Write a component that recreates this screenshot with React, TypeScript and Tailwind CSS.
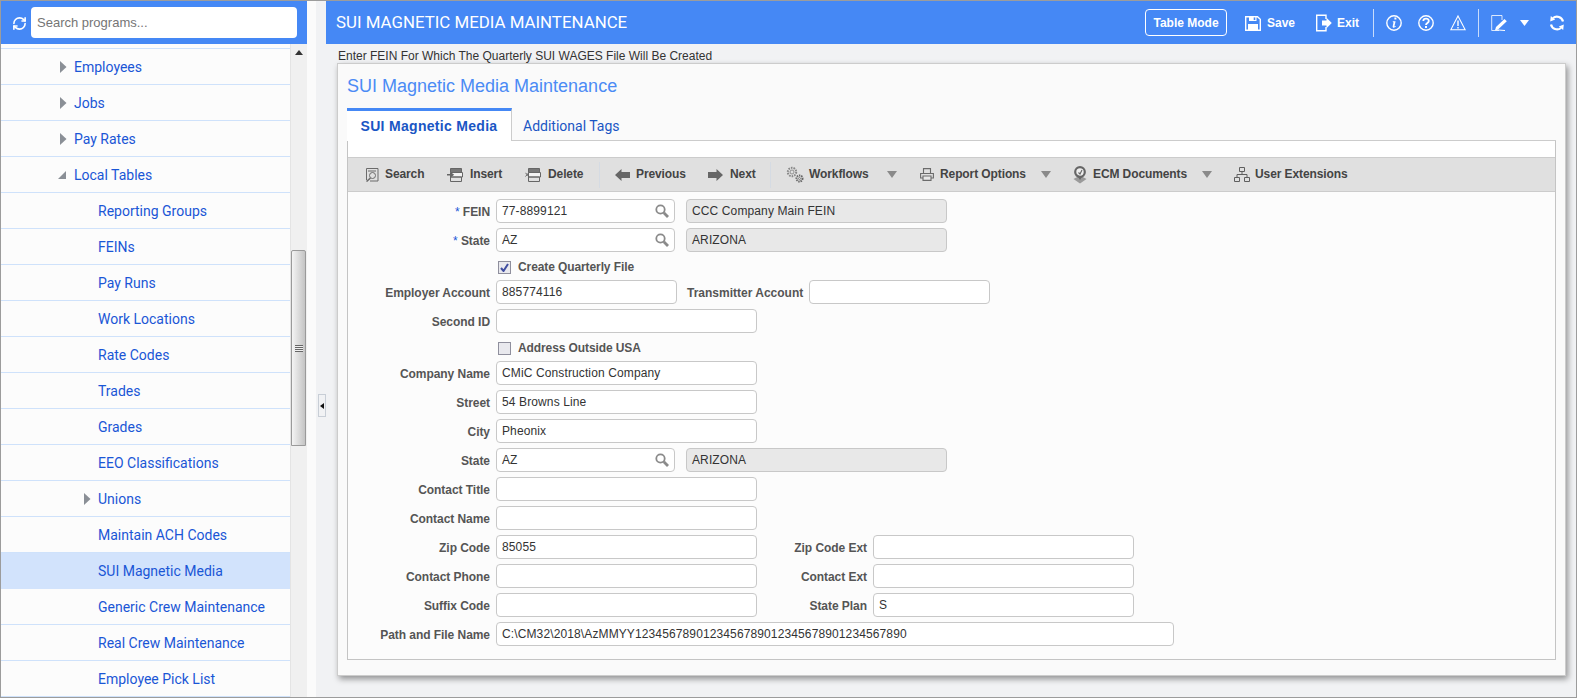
import { RefreshCw } from 'lucide-react'
import type { ReactNode } from 'react'

const menu = [
  { nombre: 'Employees', nivel: 1, flecha: 'der' },
  { nombre: 'Jobs', nivel: 1, flecha: 'der' },
  { nombre: 'Pay Rates', nivel: 1, flecha: 'der' },
  { nombre: 'Local Tables', nivel: 1, flecha: 'abajo' },
  { nombre: 'Reporting Groups', nivel: 2 },
  { nombre: 'FEINs', nivel: 2 },
  { nombre: 'Pay Runs', nivel: 2 },
  { nombre: 'Work Locations', nivel: 2 },
  { nombre: 'Rate Codes', nivel: 2 },
  { nombre: 'Trades', nivel: 2 },
  { nombre: 'Grades', nivel: 2 },
  { nombre: 'EEO Classifications', nivel: 2 },
  { nombre: 'Unions', nivel: 2, flecha: 'der' },
  { nombre: 'Maintain ACH Codes', nivel: 2 },
  { nombre: 'SUI Magnetic Media', nivel: 2, activo: true },
  { nombre: 'Generic Crew Maintenance', nivel: 2 },
  { nombre: 'Real Crew Maintenance', nivel: 2 },
  { nombre: 'Employee Pick List', nivel: 2 },
]

function Sidebar() {
  return (
    <div className="w-[306px] h-full flex flex-col shrink-0">
      <div className="h-[43px] bg-[#4588f5] flex items-center shrink-0">
        <RefreshCw size={15} strokeWidth={2.6} className="text-white ml-[11px] mr-[4px] mt-[1px]" />
        <div className="w-[266px] h-[31px] bg-white rounded-[4px] flex items-center pl-[6px] text-[13px] text-[#757575]">
          Search programs...
        </div>
      </div>
      <div className="flex-1 flex min-h-0">
        <div className="w-[290px] bg-[#fcfcfc] pt-[4px] overflow-hidden border-r border-[#e4e4e4]">
          <div className="border-t border-[#cfe2fb]">
            {menu.map((m) => (
              <div
                key={m.nombre}
                className={`h-[36px] flex items-center pt-[1px] border-b font-['Roboto',sans-serif] text-[14px] text-[#1a56d6] ${
                  m.activo ? 'bg-[#d2e3fc] border-[#d2e3fc]' : 'border-[#cfe2fb]'
                }`}
              >
                <div className={`relative ${m.nivel === 1 ? 'ml-[73px]' : 'ml-[97px]'}`}>
                  {m.flecha === 'der' && (
                    <svg width="7" height="12" viewBox="0 0 7 12" className="absolute left-[-14px] top-[4px]">
                      <path d="M0 0 L6.5 6 L0 12 Z" fill="#8a8f96" />
                    </svg>
                  )}
                  {m.flecha === 'abajo' && (
                    <svg width="8" height="8" viewBox="0 0 8 8" className="absolute left-[-16px] top-[6px]">
                      <path d="M8 0 V8 H0 Z" fill="#8a8f96" />
                    </svg>
                  )}
                  {m.nombre}
                </div>
              </div>
            ))}
          </div>
        </div>
        <div className="w-[16px] bg-[#f0f0f0] flex flex-col items-start">
          <svg width="8" height="5" viewBox="0 0 8 5" className="mt-[6px] mb-[195px] ml-[4px]">
            <path d="M4 0 L8 5 H0 Z" fill="#333" />
          </svg>
          <div className="w-[15px] h-[196px] border border-[#9a9a9a] rounded-t-[2px] bg-gradient-to-r from-[#f4f4f4] via-[#dcdcdc] to-[#c4c4c4] flex items-center justify-center">
            <div className="w-[8px] flex flex-col gap-[1px] bg-[#efefef]">
              <div className="h-[1px] bg-[#666]" />
              <div className="h-[1px] bg-[#666]" />
              <div className="h-[1px] bg-[#666]" />
              <div className="h-[1px] bg-[#666]" />
            </div>
          </div>
        </div>
      </div>
    </div>
  )
}

const HeaderIcon = ({ children, w = 16 }: { children: ReactNode; w?: number }) => (
  <svg width={w} height="18" viewBox={`0 0 ${w} 18`} fill="none" stroke="#fff" strokeWidth="1.4" className="shrink-0">
    {children}
  </svg>
)

function Header() {
  return (
    <div className="h-[43px] bg-[#4588f5] flex items-center shrink-0 text-white">
      <div className="ml-[10px] text-[16.85px] font-['Roboto',sans-serif] w-[809px] whitespace-nowrap">SUI MAGNETIC MEDIA MAINTENANCE</div>
      <div className="w-[82px] h-[27px] border border-white rounded-[4px] flex items-center justify-center text-[12px] font-bold">
        Table Mode
      </div>
      <div className="ml-[18px]">
        <HeaderIcon>
          <path d="M0.7 2.7 H12.5 L15.3 5.2 V16.3 H0.7 Z" />
          <path d="M4 2.5 H11.5 V7 H4 Z M3 10 H13 V16 H3 Z" fill="#fff" stroke="none" />
          <path d="M8.7 3.4 H10.3 V6 H8.7 Z" fill="#4588f5" stroke="none" />
        </HeaderIcon>
      </div>
      <span className="ml-[6px] text-[12px] font-bold w-[27px]">Save</span>
      <div className="ml-[22px]">
        <HeaderIcon>
          <path d="M10 5 V1.2 H0.7 V16.8 H10 V13" />
          <path d="M6 6.5 H10.5 V3.8 L15.8 9 L10.5 14.2 V11.5 H6 Z" fill="#fff" stroke="none" />
        </HeaderIcon>
      </div>
      <span className="ml-[5px] text-[12px] font-bold w-[22px]">Exit</span>
      <div className="ml-[14px] mr-[12px] w-[1px] h-[28px] bg-[#c9dcfb]" />
      <HeaderIcon>
        <circle cx="8" cy="9" r="7.2" />
        <path d="M8.4 3.6 H10.4 V5.6 H8.4 Z M6.8 7.2 H9.6 L8.5 12 C8.4 12.6 9 12.6 9.9 12 L10 12.6 C8.6 14 6.3 14.4 6.7 12.3 L7.5 8.4 L6.8 8.1 Z" fill="#fff" stroke="none" />
      </HeaderIcon>
      <div className="ml-[16px]">
        <HeaderIcon>
          <circle cx="8" cy="9" r="7.2" />
          <path d="M5.3 7 C5.4 3.9 10.8 3.9 10.8 7 C10.8 9 8 9 8 11" strokeWidth="1.8" />
          <path d="M7 12 H9 V14 H7 Z" fill="#fff" stroke="none" />
        </HeaderIcon>
      </div>
      <div className="ml-[16px]">
        <HeaderIcon>
          <path d="M8 2 L15.2 15.8 H0.8 Z" strokeWidth="1.1" />
          <path d="M7.3 6.5 H8.7 V12 H7.3 Z M7.3 13 H8.7 V14.5 H7.3 Z" fill="#fff" stroke="none" />
        </HeaderIcon>
      </div>
      <div className="ml-[12px] mr-[12px] w-[1px] h-[28px] bg-[#c9dcfb]" />
      <HeaderIcon>
        <path d="M8 16.5 H0.7 V1.5 H11 V6" strokeWidth="1" opacity="0.8" />
        <path d="M4 16.5 L5 13 L13.5 5 L15.8 7.2 L7.3 15.2 Z" fill="#fff" stroke="none" />
        <path d="M4.6 15.8 L14 16.5" strokeWidth="1" />
      </HeaderIcon>
      <svg width="9" height="6" viewBox="0 0 9 6" className="ml-[13px] mt-[1px]">
        <path d="M0 0 H9 L4.5 6 Z" fill="#fff" />
      </svg>
      <div className="ml-[20px]">
        <HeaderIcon>
          <path d="M14 7.5 A6.2 6.2 0 0 0 4 4" strokeWidth="2.2" />
          <path d="M2 10.5 A6.2 6.2 0 0 0 12 14" strokeWidth="2.2" />
          <path d="M1.2 7.5 L1.8 2 L6.2 5.6 Z M14.8 10.5 L14.2 16 L9.8 12.4 Z" fill="#fff" stroke="none" />
        </HeaderIcon>
      </div>
    </div>
  )
}

const IconoLupaDoc = () => (
  <svg width="14" height="14" viewBox="0 0 14 14" fill="none" stroke="#6b6b6b" strokeWidth="1">
    <path d="M1.5 12 V0.5 H13 V13 H5" />
    <path d="M3 3 H11" />
    <circle cx="7.5" cy="7.5" r="3" />
    <path d="M5.5 10 L1.5 13.5" strokeWidth="1.6" />
  </svg>
)

const IconoFilas = ({ x }: { x?: boolean }) => (
  <svg width="16" height="14" viewBox="0 0 16 14" fill="none" stroke="#666" strokeWidth="1">
    <path d="M3.5 0.5 H14.5 V4.5 H3.5 Z" fill="#777" />
    <path d="M3.5 4.5 H15.5 V9 H3.5 Z" fill="#f2f2f2" />
    <path d="M3.5 9 H14.5 V13.5 H3.5 Z" />
    {x ? (
      <path d="M0.5 4.8 L3.7 8.5 M3.7 4.8 L0.5 8.5" />
    ) : (
      <path d="M0 6.7 H5.5 M3.5 4.8 L6 6.7 L3.5 8.6" strokeWidth="1.4" />
    )}
  </svg>
)

const IconoEngranes = () => (
  <svg width="18" height="17" viewBox="0 0 18 17" fill="none" stroke="#888">
    <circle cx="6" cy="6" r="4.2" strokeWidth="2" strokeDasharray="1.6 1" />
    <circle cx="6" cy="6" r="2" strokeWidth="0.9" />
    <circle cx="13.5" cy="12.5" r="3" strokeWidth="2" strokeDasharray="1.4 0.8" stroke="#666" />
    <circle cx="13.5" cy="12.5" r="1" fill="#ddd" stroke="#666" strokeWidth="0.7" />
  </svg>
)

const IconoImpresora = () => (
  <svg width="14" height="13" viewBox="0 0 14 13" fill="none" stroke="#6b6b6b" strokeWidth="1.1">
    <path d="M3.5 5 V0.6 H10.5 V5" />
    <path d="M0.6 5.5 H13.4 V10 H0.6 Z" fill="#e0e0e0" />
    <path d="M3 8 H11 V12.4 H3 Z" fill="#e8e8e8" />
  </svg>
)

const IconoEcm = () => (
  <svg width="14" height="18" viewBox="0 0 14 18" fill="none" stroke="#666">
    <path d="M0.5 13 L7 9.5 L13.5 13 L7 17.5 Z" fill="#9a9a9a" stroke="none" />
    <circle cx="7" cy="6" r="4.8" strokeWidth="2.2" fill="#eee" />
    <path d="M5.5 6.5 L7 8 L9 4" strokeWidth="1.1" />
    <path d="M4.5 10 L7 14 L9.5 10" fill="#666" stroke="none" />
  </svg>
)

const IconoArbol = () => (
  <svg width="16" height="15" viewBox="0 0 16 15" fill="none" stroke="#5f5f5f" strokeWidth="1">
    <path d="M5.5 0.5 H10.5 V4.5 H5.5 Z" />
    <path d="M8 4.5 V7.5 M3 10.5 V7.5 H13 V10.5" />
    <path d="M0.5 10.5 H5.5 V14.5 H0.5 Z M10.5 10.5 H15.5 V14.5 H10.5 Z" />
  </svg>
)

const FlechaGris = ({ dir }: { dir: 'izq' | 'der' }) => (
  <svg width="15" height="12" viewBox="0 0 15 12">
    <path d={dir === 'izq' ? 'M0 6 L6.5 0 V3 H15 V9 H6.5 V12 Z' : 'M15 6 L8.5 0 V3 H0 V9 H8.5 V12 Z'} fill="#666" />
  </svg>
)

const Caret = ({ ml }: { ml: string }) => (
  <svg width="10" height="7" viewBox="0 0 10 7" className={`shrink-0 ${ml}`}>
    <path d="M0 0 H10 L5 7 Z" fill="#8a8a8a" />
  </svg>
)

const Sep = ({ className }: { className: string }) => <div className={`w-[1px] h-[26px] bg-[#d5dbe3] ${className}`} />

function Toolbar() {
  return (
    <div className="h-[35px] mt-[16px] bg-[#e0e0e0] border-y border-[#cccccc] flex items-center text-[12px] font-bold tracking-[-0.1px] whitespace-nowrap text-[#444] shrink-0">
      <div className="ml-[17px]"><IconoLupaDoc /></div>
      <span className="ml-[6px] w-[40px] pb-[1px]">Search</span>
      <div className="ml-[22px]"><IconoFilas /></div>
      <span className="ml-[7px] w-[33px] pb-[1px]">Insert</span>
      <div className="ml-[22px]"><IconoFilas x /></div>
      <span className="ml-[7px] w-[36px] pb-[1px]">Delete</span>
      <Sep className="ml-[15px]" />
      <div className="ml-[15px]"><FlechaGris dir="izq" /></div>
      <span className="ml-[6px] w-[50px] pb-[1px]">Previous</span>
      <div className="ml-[22px]"><FlechaGris dir="der" /></div>
      <span className="ml-[7px] w-[25px] pb-[1px]">Next</span>
      <Sep className="ml-[15px]" />
      <div className="ml-[15px]"><IconoEngranes /></div>
      <span className="ml-[5px] w-[62px] pb-[1px]">Workflows</span>
      <Caret ml="ml-[16px]" />
      <div className="ml-[23px]"><IconoImpresora /></div>
      <span className="ml-[6px] w-[85px] pb-[1px]">Report Options</span>
      <Caret ml="ml-[16px]" />
      <div className="ml-[22px]"><IconoEcm /></div>
      <span className="ml-[6px] w-[93px] pb-[1px]">ECM Documents</span>
      <Caret ml="ml-[16px]" />
      <div className="ml-[22px]"><IconoArbol /></div>
      <span className="ml-[5px] pb-[1px]">User Extensions</span>
    </div>
  )
}

const Label = ({ children, w, req }: { children: string; w: string; req?: boolean }) => (
  <div className={`${w} shrink-0 text-right font-bold tracking-[-0.05px] text-[#555] pt-[1px] whitespace-nowrap`}>
    {req && <span className="text-[#1a56d6] font-normal">* </span>}
    {children}
  </div>
)

const Lupa = () => (
  <svg width="14" height="14" viewBox="0 0 14 14" fill="none" stroke="#8a8a8a" className="shrink-0">
    <circle cx="5.5" cy="5.5" r="4.2" strokeWidth="1.8" />
    <path d="M8.8 8.8 L13 13" strokeWidth="2.8" />
  </svg>
)

const Campo = ({ w, valor, lupa, ro, ml }: { w: string; valor?: string; lupa?: boolean; ro?: boolean; ml?: string }) => (
  <div
    className={`${w} ${ml ?? ''} h-[24px] shrink-0 rounded-[4px] border border-[#c8c8c8] flex items-center justify-between pl-[5px] pr-[5px] text-[#333] tracking-[0.12px] ${
      ro ? 'bg-[#e8e8e8]' : 'bg-white'
    }`}
  >
    <span className="pb-[1px]">{valor}</span>
    {lupa && <Lupa />}
  </div>
)

const Fila = ({ children }: { children: ReactNode }) => <div className="flex items-center h-[24px] gap-[6px]">{children}</div>

const Check = ({ texto, marcado }: { texto: string; marcado?: boolean }) => (
  <div className="flex items-center h-[18px] pt-[2px] pl-[150px] font-bold tracking-[-0.1px] text-[#555]">
    <div className="w-[13px] h-[13px] border border-[#8f8f9d] bg-[#e9e9ee] flex items-center justify-center shrink-0">
      {marcado && (
        <svg width="9" height="9" viewBox="0 0 9 9">
          <path d="M1 5 L3.5 8 L8 1" fill="none" stroke="#3f4da0" strokeWidth="2" />
        </svg>
      )}
    </div>
    <span className="ml-[7px]">{texto}</span>
  </div>
)

function Formulario() {
  return (
    <div className="flex-1 bg-[#fcfcfc] pt-[7px] flex flex-col gap-[5px] text-[12px]">
      <Fila>
        <Label w="w-[142px]" req>FEIN</Label>
        <Campo w="w-[179px]" valor="77-8899121" lupa />
        <Campo w="w-[261px]" ml="ml-[5px]" valor="CCC Company Main FEIN" ro />
      </Fila>
      <Fila>
        <Label w="w-[142px]" req>State</Label>
        <Campo w="w-[179px]" valor="AZ" lupa />
        <Campo w="w-[261px]" ml="ml-[5px]" valor="ARIZONA" ro />
      </Fila>
      <Check texto="Create Quarterly File" marcado />
      <Fila>
        <Label w="w-[142px]">Employer Account</Label>
        <Campo w="w-[181px]" valor="885774116" />
        <div className="ml-[4px] w-[116px] shrink-0 font-bold text-[#555] pt-[1px] whitespace-nowrap">Transmitter Account</div>
        <Campo w="w-[181px]" />
      </Fila>
      <Fila>
        <Label w="w-[142px]">Second ID</Label>
        <Campo w="w-[261px]" />
      </Fila>
      <Check texto="Address Outside USA" />
      <Fila>
        <Label w="w-[142px]">Company Name</Label>
        <Campo w="w-[261px]" valor="CMiC Construction Company" />
      </Fila>
      <Fila>
        <Label w="w-[142px]">Street</Label>
        <Campo w="w-[261px]" valor="54 Browns Line" />
      </Fila>
      <Fila>
        <Label w="w-[142px]">City</Label>
        <Campo w="w-[261px]" valor="Pheonix" />
      </Fila>
      <Fila>
        <Label w="w-[142px]">State</Label>
        <Campo w="w-[179px]" valor="AZ" lupa />
        <Campo w="w-[261px]" ml="ml-[5px]" valor="ARIZONA" ro />
      </Fila>
      <Fila>
        <Label w="w-[142px]">Contact Title</Label>
        <Campo w="w-[261px]" />
      </Fila>
      <Fila>
        <Label w="w-[142px]">Contact Name</Label>
        <Campo w="w-[261px]" />
      </Fila>
      <Fila>
        <Label w="w-[142px]">Zip Code</Label>
        <Campo w="w-[261px]" valor="85055" />
        <Label w="w-[104px]">Zip Code Ext</Label>
        <Campo w="w-[261px]" />
      </Fila>
      <Fila>
        <Label w="w-[142px]">Contact Phone</Label>
        <Campo w="w-[261px]" />
        <Label w="w-[104px]">Contact Ext</Label>
        <Campo w="w-[261px]" />
      </Fila>
      <Fila>
        <Label w="w-[142px]">Suffix Code</Label>
        <Campo w="w-[261px]" />
        <Label w="w-[104px]">State Plan</Label>
        <Campo w="w-[261px]" valor="S" />
      </Fila>
      <Fila>
        <Label w="w-[142px]">Path and File Name</Label>
        <Campo w="w-[678px]" valor="C:\CM32\2018\AzMMYY1234567890123456789012345678901234567890" />
      </Fila>
    </div>
  )
}

export default function App() {
  return (
    <div className="w-[1577px] h-[698px] border border-[#9c9c9c] bg-[#f1f2f4] flex overflow-hidden font-['Liberation_Sans',Arial,sans-serif]">
      <Sidebar />
      <div className="w-[9px] bg-[#fbfbfb] shrink-0" />
      <div className="w-[10px] shrink-0 pt-[393px] flex justify-end">
        <div className="w-[8px] h-[23px] border border-[#c8ced6] bg-[#f1f2f4] flex items-center justify-center">
          <svg width="4" height="6" viewBox="0 0 4 6">
            <path d="M4 0 V6 L0 3 Z" fill="#111" />
          </svg>
        </div>
      </div>
      <div className="flex-1 flex flex-col min-w-0">
        <Header />
        <div className="h-[19px] pl-[12px] text-[12px] text-[#333] flex items-center pt-[5px] shrink-0">
          Enter FEIN For Which The Quarterly SUI WAGES File Will Be Created
        </div>
        <div className="ml-[11px] w-[1229px] h-[613px] bg-[#fafafa] border border-[#cccccc] shadow-[2px_3px_6px_rgba(0,0,0,0.4)] px-[9px] flex flex-col">
          <div className="h-[44px] flex items-center text-[18px] text-[#4b8bf5] pt-[1px]">SUI Magnetic Media Maintenance</div>
          <div className="h-[33px] flex shrink-0 border-b border-[#cccccc]">
            <div className="w-[165px] h-[33px] bg-white border-t-[3px] border-t-[#4588f5] border-r border-r-[#cccccc] flex items-center justify-center text-[14px] tracking-[0.3px] font-bold text-[#1a56c4]">
              SUI Magnetic Media
            </div>
            <div className="ml-[11px] flex items-center text-[14px] text-[#1a56c4] pt-[4px] font-['Roboto',sans-serif]">Additional Tags</div>
          </div>
          <div className="h-[519px] border-x border-b border-[#c4c4c4] bg-white flex flex-col">
            <Toolbar />
            <Formulario />
          </div>
        </div>
      </div>
    </div>
  )
}
